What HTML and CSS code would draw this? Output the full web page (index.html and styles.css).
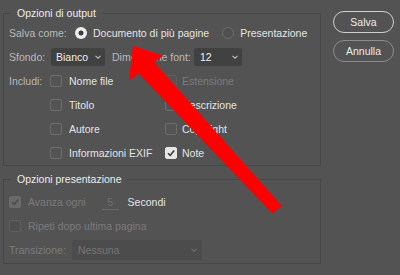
FILE: index.html
```html
<!DOCTYPE html>
<html lang="it">
<head>
<meta charset="utf-8">
<link rel="stylesheet" href="styles.css">
</head>
<body>
<div class="dialog">
  <div class="panels">
    <fieldset class="panel panel-output">
      <legend>Opzioni di output</legend>
      <div class="row">
        <span class="lbl lbl-salva">Salva come:</span>
        <span class="radio on"></span><span class="opt">Documento di più pagine</span>
        <span class="radio radio2"></span><span class="opt">Presentazione</span>
      </div>
      <div class="row">
        <span class="lbl lbl-sfondo">Sfondo:</span>
        <span class="select sel-bg">Bianco<svg class="chev" viewBox="0 0 6 4"><path d="M0.5 0.8 L3 3.2 L5.5 0.8" /></svg></span>
        <span class="lbl lbl-dim">Dimensione font:</span>
        <span class="select sel-font">12<svg class="chev" viewBox="0 0 6 4"><path d="M0.5 0.8 L3 3.2 L5.5 0.8" /></svg></span>
      </div>
      <div class="row includi">
        <span class="lbl lbl-inc">Includi:</span>
        <div class="checks">
          <span class="chk-item"><span class="box"></span><span class="opt">Nome file</span></span>
          <span class="chk-item"><span class="box dis"></span><span class="opt off">Estensione</span></span>
          <span class="chk-item"><span class="box"></span><span class="opt">Titolo</span></span>
          <span class="chk-item"><span class="box"></span><span class="opt">Descrizione</span></span>
          <span class="chk-item"><span class="box"></span><span class="opt">Autore</span></span>
          <span class="chk-item"><span class="box"></span><span class="opt">Copyright</span></span>
          <span class="chk-item"><span class="box"></span><span class="opt">Informazioni EXIF</span></span>
          <span class="chk-item"><span class="box checked"><svg viewBox="0 0 10 10"><path d="M2 5.2 L4.2 7.4 L8.2 2.4" /></svg></span><span class="opt">Note</span></span>
        </div>
      </div>
    </fieldset>
    <fieldset class="panel panel-pres">
      <legend>Opzioni presentazione</legend>
      <div class="row">
        <span class="box dis-checked"><svg viewBox="0 0 10 10"><path d="M2 5.2 L4.2 7.4 L8.2 2.4" /></svg></span>
        <span class="opt off">Avanza ogni</span>
        <span class="num">5</span>
        <span class="opt">Secondi</span>
      </div>
      <div class="row">
        <span class="box dis-box"></span>
        <span class="opt off">Ripeti dopo ultima pagina</span>
      </div>
      <div class="row">
        <span class="lbl off lbl-trans">Transizione:</span>
        <span class="select sel-trans">Nessuna<svg class="chev" viewBox="0 0 6 4"><path d="M0.5 0.8 L3 3.2 L5.5 0.8" /></svg></span>
      </div>
    </fieldset>
  </div>
  <div class="buttons">
    <button class="btn primary">Salva</button>
    <button class="btn">Annulla</button>
  </div>
</div>
<svg class="arrow" viewBox="0 0 400 275" width="400" height="275">
  <polygon points="133,46 129,81 163,56" fill="#ff0000"/>
  <polygon points="139,74 152,60 281.6,206 272.6,214" fill="#ff0000"/>
</svg>
</body>
</html>
```
FILE: styles.css
```css
html, body {
  margin: 0;
  padding: 0;
  background: #535353;
}
body {
  width: 400px;
  height: 275px;
  overflow: hidden;
  position: relative;
  font-family: "Liberation Sans", Arial, sans-serif;
  font-size: 10.5px;
  color: #e2e2e2;
}
.dialog {
  display: flex;
  padding: 7px 0 0 3px;
  gap: 12px;
}
.panels {
  width: 318px;
  display: flex;
  flex-direction: column;
  gap: 7px;
}
.panel {
  margin: 0;
  border: 1px solid #474747;
  padding: 4px 0 3px 5px;
  display: flex;
  flex-direction: column;
  gap: 6px;
}
.panel legend {
  margin-left: 2px;
  padding: 0 6px;
  line-height: 13px;
  color: #ececec;
}
.panel-pres {
  padding-top: 7px;
  padding-bottom: 4px;
}
.row {
  display: flex;
  align-items: center;
  height: 18px;
}
.lbl {
  color: #b9b9b9;
  white-space: nowrap;
}
.lbl-salva { width: 66px; }
.lbl-sfondo { width: 42px; }
.lbl-dim { margin-left: 7px; width: 82px; }
.lbl-inc { width: 41px; align-self: flex-start; line-height: 18px; }
.lbl-trans { width: 63px; }
.opt { white-space: nowrap; color: #e4e4e4; }
.off { color: #7b7b7b; }
.radio {
  width: 12px;
  height: 12px;
  box-sizing: border-box;
  border-radius: 50%;
  border: 1px solid #6b6b6b;
  background: #505050;
  margin-right: 6px;
  flex: none;
}
.radio.on {
  border: none;
  background: radial-gradient(circle, #3c3c3c 0 2.2px, #ececec 2.8px);
}
.radio2 { margin-left: 13px; }
.select {
  position: relative;
  height: 18px;
  box-sizing: border-box;
  background: #414141;
  border-radius: 2px;
  color: #efefef;
  display: flex;
  align-items: center;
  padding-left: 5px;
}
.sel-bg { width: 54px; }
.sel-font { width: 48px; padding-left: 6px; }
.sel-trans {
  width: 130px;
  height: 20px;
  background: #4c4c4c;
  color: #767676;
  padding-left: 6px;
}
.chev {
  position: absolute;
  right: 4px;
  top: 7px;
  width: 6px;
  height: 4px;
  fill: none;
  stroke: #bdbdbd;
  stroke-width: 1.1;
}
.sel-trans .chev { stroke: #6e6e6e; right: 5px; top: 8px; }
.includi {
  height: auto;
  align-items: flex-start;
}
.checks {
  display: grid;
  grid-template-columns: 115px auto;
  grid-auto-rows: 18px;
  row-gap: 6px;
}
.chk-item {
  display: flex;
  align-items: center;
}
.box {
  width: 12px;
  height: 12px;
  box-sizing: border-box;
  border: 1px solid #6c6c6c;
  border-radius: 2px;
  background: #545454;
  margin-right: 7px;
  flex: none;
  display: flex;
}
.chk-item:nth-child(even) .box { margin-right: 5px; }
.box.dis { border-color: #5e5e5e; }
.box svg { width: 10px; height: 10px; margin: auto; fill: none; stroke-width: 1.6; }
.box.checked { background: #e6e6e6; border-color: #e6e6e6; }
.box.checked svg { stroke: #3a3a3a; }
.box.dis-checked { background: #6a6a6a; border-color: #6a6a6a; }
.box.dis-checked svg { stroke: #4a4a4a; }
.box.dis-box { background: #4f4f4f; border-color: #5f5f5f; }
.num {
  width: 17px;
  margin-left: 16px;
  margin-right: 9px;
  text-align: center;
  color: #6f6f6f;
  border-bottom: 1px solid #6a6a6a;
  line-height: 14px;
}
.buttons {
  display: flex;
  flex-direction: column;
  gap: 7px;
  padding-top: 4px;
}
.btn {
  width: 61px;
  height: 22px;
  border-radius: 11px;
  border: 1px solid #8c8c8c;
  background: #535353;
  color: #ececec;
  font-family: "Liberation Sans", Arial, sans-serif;
  font-size: 10.5px;
  padding: 0;
}
.btn.primary { border: 1.5px solid #cfcfcf; }
.arrow {
  position: absolute;
  left: 0;
  top: 0;
  pointer-events: none;
}
```
